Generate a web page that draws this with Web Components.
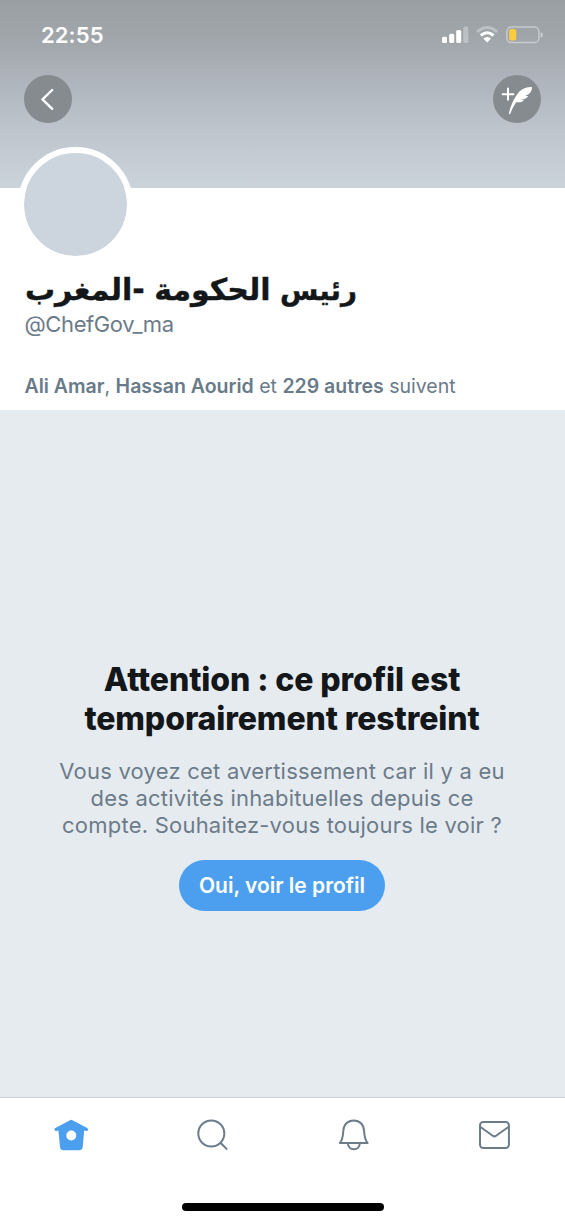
<!DOCTYPE html>
<html lang="fr">
<head>
<meta charset="utf-8">
<title>Profil</title>
<style>
html,body{margin:0;height:100%}
body{font-family:Inter,"Liberation Sans",sans-serif;background:#fff;overflow:hidden}
</style>
</head>
<body>
<profile-screen></profile-screen>
<script>
const define = (name, html) => customElements.define(name, class extends HTMLElement {
  constructor() {
    super();
    this.attachShadow({mode: 'open'}).innerHTML = html;
  }
});

define('status-bar', `
<style>
:host{display:flex;justify-content:space-between;align-items:center;height:20px;padding:25px 22px 0 41px;color:#fff}
time{font-size:22px;line-height:20px;font-weight:600;letter-spacing:.1px}
svg{display:block}
</style>
<time>22:55</time>
<svg width="101" height="20" viewBox="0 0 101 20" fill="#fff">
  <rect x="0" y="11.8" width="5" height="6.2" rx="1.5"/>
  <rect x="7.2" y="8.8" width="5" height="9.2" rx="1.5"/>
  <rect x="14.2" y="5" width="5" height="13" rx="1.5"/>
  <rect x="21.3" y="1.5" width="5" height="16.5" rx="1.5" opacity=".3"/>
  <path d="M35.2 6.9Q45.2 -2 55.2 6.9" fill="none" stroke="#fff" stroke-width="2.8" opacity=".32"/>
  <path d="M38.9 10.5Q45.2 5 51.5 10.5" fill="none" stroke="#fff" stroke-width="3"/>
  <path d="M41.3 13.5Q45.2 10.4 49.1 13.5L45.2 17.5Z"/>
  <rect x="64.9" y="1.9" width="32" height="15.7" rx="4.4" fill="none" stroke="#fff" stroke-width="1.5" opacity=".42"/>
  <path d="M98.6 6.9Q101 8 101 9.8T98.6 12.7Z" opacity=".45"/>
  <rect x="67.2" y="4" width="7" height="11.4" rx="2" fill="#fbcd3c"/>
</svg>`);

define('round-button', `
<style>
:host{display:block;width:48px;height:48px;border-radius:50%;background:#868b8f;overflow:hidden}
</style>
<slot></slot>`);

define('profile-banner', `
<style>
:host{display:block;height:188px;background:linear-gradient(#9a9fa3 0,#a1a6ab 40px,#b0b6be 85px,#bfc6ce 135px,#cbd3db 188px)}
nav{display:flex;justify-content:space-between;padding:30px 24px 0}
svg{display:block}
</style>
<status-bar></status-bar>
<nav>
  <round-button><svg width="48" height="48" fill="none" stroke="#fff" stroke-width="2.4" stroke-linecap="round" stroke-linejoin="round"><path d="M28.2 15L18.5 24.3L28.2 33.8"/></svg></round-button>
  <round-button><svg width="48" height="48" fill="#fff"><path d="M9.6 19.2H20.4M15 13.6V24.8" stroke="#fff" stroke-width="2" stroke-linecap="round"/><path d="M39 12.1C33.6 12 29.2 13.6 26.2 16.8C21.8 21.8 18 29.5 15.9 38.2C16 39.4 17 39.5 17.4 38.5C18.8 34.4 21 30.5 23.3 27.3C26.3 27.6 29.3 27 30.8 25.2L27.8 24.6C30.9 24.6 33.4 23.8 35.2 21.3L32.4 20.5C36.5 19.8 39.2 16.4 39 12.1Z"/></svg></round-button>
</nav>`);

define('profile-identity', `
<style>
:host{display:block;height:221.5px;box-sizing:border-box;padding-left:18px;background:#fff}
.avatar{width:103px;height:103px;margin-top:-41px;border:6px solid #fff;border-radius:50%;background:#ccd5dd;background-clip:padding-box;position:relative}
h1{margin:4px 0 0 7px;width:332px;height:48px;white-space:nowrap;font:700 30px/48px "DejaVu Sans",sans-serif;color:#14171a;direction:rtl;text-align:left;word-spacing:-1px;-webkit-text-stroke:.4px #14171a}
h1 span{font-size:27.8px}
.handle{margin:-3px 0 0 6.5px;font-size:22px;line-height:26px;color:#6c7b89;letter-spacing:-.4px}
.follow{margin:37px 0 0 6.5px;font-size:19.5px;line-height:24px;color:#697a89;white-space:nowrap}
b{font-weight:600}
</style>
<div class="avatar"></div>
<h1 lang="ar"><span>رئيس</span> الحكومة -المغرب</h1>
<div class="handle">@ChefGov_ma</div>
<div class="follow"><b>Ali Amar</b>, <b>Hassan Aourid</b> et <b>229 autres</b> suivent</div>`);

define('profile-warning', `
<style>
:host{display:flex;flex-direction:column;align-items:center;height:688.5px;box-sizing:border-box;padding:250px 1px 0 0;background:#e6ebf0;border-bottom:1px solid #c9d3dc;text-align:center;white-space:nowrap}
h2{margin:0;font-size:32px;line-height:39px;font-weight:800;color:#14171a;letter-spacing:-.1px}
p{margin:20px 0 0;font-size:22px;line-height:27px;color:#6c7b89;letter-spacing:.22px}
button{margin:21px 0 0;width:206px;height:51px;padding:0;border:0;border-radius:26px;background:#4c9fee;color:#fff;font:600 21px/51px Inter,"Liberation Sans",sans-serif}
</style>
<h2>Attention : ce profil est<br>temporairement restreint</h2>
<p>Vous voyez cet avertissement car il y a eu<br>des activités inhabituelles depuis ce<br>compte. Souhaitez-vous toujours le voir ?</p>
<button>Oui, voir le profil</button>`);

define('tab-bar', `
<style>
:host{display:flex;flex-direction:column;align-items:center;height:125px;background:#fff}
nav{display:grid;grid-template-columns:repeat(4,1fr);width:100%;padding-top:17px;justify-items:center}
svg{display:block;fill:none;stroke:#6b7c8b;stroke-width:2;stroke-linecap:round;stroke-linejoin:round}
i{display:block;width:202px;height:8px;margin-top:48px;border-radius:4px;background:#000}
</style>
<nav>
  <svg width="40" height="40" viewBox="0 0 40 40"><path fill="#4c9fee" stroke="none" fill-rule="evenodd" d="M20.2 4.8Q20.8 4.8 21.5 5.2L36.2 13.1Q37.5 14 36.9 15.3Q36.3 16.3 34.9 15.9L33.2 15.4L31.7 32Q31.3 35.3 28 35.3H12.6Q9.3 35.3 9 32L7.4 15.4L5.5 16Q4 16.3 3.5 15.1Q3.1 13.8 4.4 13.1L19 5.2Q19.7 4.8 20.2 4.8ZM20.3 15.5A5 5 0 1 0 20.3 25.5A5 5 0 1 0 20.3 15.5Z"/></svg>
  <svg width="40" height="40" viewBox="0 0 40 40"><circle cx="19.3" cy="18.5" r="13"/><path d="M28.9 28.2L34.6 33.9"/></svg>
  <svg width="40" height="40" viewBox="0 0 40 40"><path d="M6.9 28C9.5 25 10 21 10.3 16C10.6 9.6 14.8 5.4 20.7 5.4S30.8 9.6 31.1 16C31.4 21 31.9 25 34.6 28ZM14.9 28.2C14.9 36.2 26.8 36.2 26.8 28.2"/></svg>
  <svg width="40" height="40" viewBox="0 0 40 40"><rect x="6" y="7" width="28.9" height="25.9" rx="3.2"/><path d="M6.5 12L18.7 20.7Q20.4 22 22.1 20.7L34.4 12"/></svg>
</nav>
<i></i>`);

define('profile-screen', `
<style>:host{display:flex;flex-direction:column;width:565px;height:1223px}</style>
<profile-banner></profile-banner>
<profile-identity></profile-identity>
<profile-warning></profile-warning>
<tab-bar></tab-bar>`);
</script>
</body>
</html>
